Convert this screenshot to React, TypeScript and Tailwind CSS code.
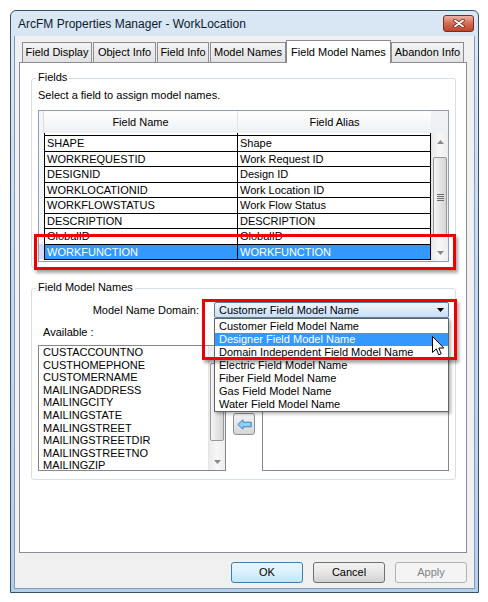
import React from "react";

// ArcFM Properties Manager dialog (Win7 look), "Field Model Names" tab open,
// with the model-name domain combo dropped down.

const ROWS: [string, string][] = [
  ["SHAPE", "Shape"],
  ["WORKREQUESTID", "Work Request ID"],
  ["DESIGNID", "Design ID"],
  ["WORKLOCATIONID", "Work Location ID"],
  ["WORKFLOWSTATUS", "Work Flow Status"],
  ["DESCRIPTION", "DESCRIPTION"],
  ["GlobalID", "GlobalID"],
  ["WORKFUNCTION", "WORKFUNCTION"],
];

const AVAILABLE = [
  "CUSTACCOUNTNO",
  "CUSTHOMEPHONE",
  "CUSTOMERNAME",
  "MAILINGADDRESS",
  "MAILINGCITY",
  "MAILINGSTATE",
  "MAILINGSTREET",
  "MAILINGSTREETDIR",
  "MAILINGSTREETNO",
  "MAILINGZIP",
];

const DOMAINS = [
  "Customer Field Model Name",
  "Designer Field Model Name",
  "Domain Independent Field Model Name",
  "Electric Field Model Name",
  "Fiber Field Model Name",
  "Gas Field Model Name",
  "Water Field Model Name",
];

const TABS = [
  { label: "Field Display", cls: "w-[70px]" },
  { label: "Object Info", cls: "ml-[1px] w-[63px]" },
  { label: "Field Info", cls: "ml-[1px] w-[52px]" },
  { label: "Model Names", cls: "ml-[1px] w-[76px]" },
  { label: "Field Model Names", cls: "w-[105px]", active: true },
  { label: "Abandon Info", cls: "w-[73px]" },
];

function Arrow({ dir }: { dir: "up" | "down" }) {
  return (
    <svg width="7" height="4" viewBox="0 0 7 4">
      <path d={dir === "up" ? "M0 4 L3.5 0 L7 4 Z" : "M0 0 L7 0 L3.5 4 Z"} fill="#8a8a8a" />
    </svg>
  );
}

function VScroll({ thumb }: { thumb: string }) {
  return (
    <div className="flex h-full w-[17px] flex-col border-l border-[#e4e4e4] bg-gradient-to-r from-[#ebebeb] via-[#f7f7f7] to-[#ededed]">
      <div className="flex h-[17px] items-center justify-center">
        <Arrow dir="up" />
      </div>
      <div className="flex-1">
        <div
          className={`mx-[1px] flex flex-col items-center justify-center gap-[1px] rounded-[2px] border border-[#979797] bg-gradient-to-r from-[#f5f5f5] to-[#d5d5d5] ${thumb}`}
        >
          <div className="h-[1px] w-[7px] bg-[#6e6e6e]" />
          <div className="h-[1px] w-[7px] bg-[#6e6e6e]" />
          <div className="h-[1px] w-[7px] bg-[#6e6e6e]" />
          <div className="h-[1px] w-[7px] bg-[#6e6e6e]" />
        </div>
      </div>
      <div className="flex h-[17px] items-center justify-center">
        <Arrow dir="down" />
      </div>
    </div>
  );
}

function GroupBox({ label, className, children }: { label: string; className: string; children: React.ReactNode }) {
  return (
    <div className={`relative ml-[11px] w-[425px] rounded-[3px] border border-[#d5dfe5] ${className}`}>
      <div className="absolute -top-[8px] left-[4px] bg-white px-[2px] leading-[13px]">{label}</div>
      {children}
    </div>
  );
}

function FieldsGrid() {
  return (
    <div className="ml-[6px] mt-[8px] h-[152px] w-[411px] border border-[#8e9fb5] bg-white">
      <div className="flex h-[22px] bg-gradient-to-b from-white to-[#eef0f3]">
        <div className="w-[5px] border-r border-[#d8dde4] bg-[#f3f5f8]" />
        <div className="flex w-[193px] items-center justify-center">Field Name</div>
        <div className="flex w-[194px] items-center justify-center border-l border-[#e2e4e8]">Field Alias</div>
        <div className="w-[17px] bg-[#eef0f3]" />
      </div>
      <div className="flex h-[128px]">
        <div className="flex w-[392px] flex-col">
          <div className="flex h-[2px]">
            <div className="w-[5px] bg-[#f5f7fa]" />
            <div className="w-[193px] border-l border-black" />
            <div className="w-[194px] border-x border-black" />
          </div>
          {ROWS.map(([name, alias], i) => {
            const sel = i === ROWS.length - 1;
            return (
              <div key={name} className="flex h-[15.5px]">
                <div className={`w-[5px] ${sel ? "bg-[#cfe0f4]" : "bg-[#f5f7fa]"}`} />
                <div
                  className={`flex flex-1 border-t border-black leading-[14px] ${
                    sel ? "bg-[#3399ff] text-white" : ""
                  }`}
                >
                  <div className="w-[193px] overflow-hidden whitespace-nowrap border-l border-black pl-[2px]">{name}</div>
                  <div className="w-[194px] overflow-hidden whitespace-nowrap border-x border-black pl-[2px]">{alias}</div>
                </div>
              </div>
            );
          })}
          <div className="flex h-[1px]">
            <div className="w-[5px] bg-[#f5f7fa]" />
            <div className="flex-1 bg-black" />
          </div>
        </div>
        <VScroll thumb="mt-[7px] h-[80px]" />
      </div>
    </div>
  );
}

function Button({ label, kind }: { label: string; kind: "default" | "normal" | "disabled" }) {
  const look =
    kind === "default"
      ? "border-[#3c7fb1] bg-gradient-to-b from-[#eaf6fd] via-[#d9f0fc] to-[#bee6fd] text-black"
      : kind === "normal"
        ? "border-[#707070] bg-gradient-to-b from-[#f2f2f2] via-[#e6e6e6] to-[#d2d2d2] text-black"
        : "border-[#adb2b5] bg-[#f4f4f4] text-[#838383]";
  return (
    <div className={`flex h-[21px] w-[72px] items-center justify-center rounded-[3px] border ${look}`}>{label}</div>
  );
}

export default function App() {
  return (
    <div className="relative h-[602px] w-[488px] overflow-hidden bg-white pl-[10px] pt-[10px] font-['Liberation_Sans',Arial,sans-serif] text-[11px] text-black">
      {/* window frame */}
      <div className="flex h-[583px] w-[469px] flex-col rounded-t-[6px] border border-[#34506f] bg-gradient-to-b from-[#dae7f5] via-[#c3d8ee] to-[#b6cfe9]">
        <div className="flex h-[25px] shrink-0 items-center justify-between pl-[7px] pr-[4px]">
          <span className="text-[12px] text-[#0b1a2c]">ArcFM Properties Manager - WorkLocation</span>
          <div className="flex h-[17px] w-[31px] items-center justify-center rounded-[3px] border border-[#7a2d1d] bg-gradient-to-b from-[#eab3a5] via-[#d46a52] to-[#c2432a]">
            <svg width="12" height="9" viewBox="0 0 12 9">
              <path d="M2 1.5 L10 7.5 M10 1.5 L2 7.5" stroke="#5a2418" strokeWidth="3.4" strokeLinecap="round" />
              <path d="M2 1.5 L10 7.5 M10 1.5 L2 7.5" stroke="#ffffff" strokeWidth="1.9" strokeLinecap="round" />
            </svg>
          </div>
        </div>

        {/* client area */}
        <div className="mx-[3px] mb-[3px] flex-1 border-x border-b border-[#7f9cbf] bg-[#f0f0f0]">
          <div className="ml-[4px] mr-[7px]">
            <div className="mt-[4px] flex h-[22px] items-end pl-[3px]">
              {TABS.map((t) =>
                t.active ? (
                  <div
                    key={t.label}
                    className={`relative z-10 -mb-[1px] flex h-[23px] items-start justify-center border-x border-t border-[#898c95] bg-white pt-[3px] ${t.cls}`}
                  >
                    {t.label}
                  </div>
                ) : (
                  <div
                    key={t.label}
                    className={`flex h-[20px] items-center justify-center border-x border-t border-[#898c95] bg-gradient-to-b from-[#f3f3f3] to-[#e2e2e2] ${t.cls}`}
                  >
                    {t.label}
                  </div>
                ),
              )}
            </div>

            {/* tab page */}
            <div className="h-[491px] border border-[#898c95] bg-white">
              <GroupBox label="Fields" className="mt-[15px] h-[190px]">
                <div className="ml-[6px] mt-[10px] h-[13px] leading-[13px]">Select a field to assign model names.</div>
                <FieldsGrid />
              </GroupBox>

              <GroupBox label="Field Model Names" className="mt-[20px] h-[192px]">
                <div className="mt-[13px] flex h-[16px] items-center">
                  <div className="w-[167px] text-right">Model Name Domain:</div>
                  <div className="relative ml-[15px] h-[16px] w-[235px]">
                    <div className="flex h-full items-center justify-between rounded-[2px] border border-[#5b7fa6] bg-gradient-to-b from-[#eef5fc] to-[#c9def3] pl-[4px] pr-[4px]">
                      <span>Customer Field Model Name</span>
                      <svg width="7" height="4" viewBox="0 0 7 4">
                        <path d="M0 0 L7 0 L3.5 4 Z" fill="#000" />
                      </svg>
                    </div>
                    {/* dropped-down list */}
                    <div className="absolute left-0 top-[16px] z-20 h-[94px] w-[235px] border border-[#646464] bg-white pt-[1px] shadow-[2px_2px_3px_rgba(0,0,0,0.3)]">
                      {DOMAINS.map((d, i) => (
                        <div
                          key={d}
                          className={`h-[13px] whitespace-nowrap pl-[4px] leading-[13px] ${
                            i === 1 ? "bg-[#3399ff] text-white" : ""
                          }`}
                        >
                          {d}
                        </div>
                      ))}
                    </div>
                  </div>
                </div>

                <div className="ml-[6px] mt-[8px] flex items-start">
                  <div className="w-[188px]">
                    <div className="h-[13px] pl-[5px] leading-[13px]">Available :</div>
                    <div className="mt-[6px] flex h-[126px] border border-[#828790] bg-white">
                      <div className="flex-1 overflow-hidden pl-[4px]">
                        {AVAILABLE.map((a) => (
                          <div key={a} className="h-[12.6px] whitespace-nowrap leading-[12.6px]">
                            {a}
                          </div>
                        ))}
                      </div>
                      <VScroll thumb="h-[78px]" />
                    </div>
                  </div>
                  <div className="ml-[7px] mt-[87px] flex h-[22px] w-[22px] items-center justify-center rounded-[3px] border border-[#8e8f8f] bg-gradient-to-b from-[#f4f4f4] to-[#d6d6d6]">
                    <svg width="15" height="11" viewBox="0 0 15 11">
                      <path
                        d="M0.8 5.5 L6 0.8 L6 3.2 L14.2 3.2 L14.2 7.8 L6 7.8 L6 10.2 Z"
                        fill="#8fd0fb"
                        stroke="#3d7fc4"
                        strokeWidth="1"
                        strokeLinejoin="round"
                      />
                    </svg>
                  </div>
                  <div className="ml-[7px] mt-[19px] h-[126px] w-[187px] border border-[#828790] bg-white" />
                </div>
              </GroupBox>
            </div>

            <div className="mt-[9px] flex justify-end gap-[10px]">
              <Button label="OK" kind="default" />
              <Button label="Cancel" kind="normal" />
              <Button label="Apply" kind="disabled" />
            </div>
          </div>
        </div>
      </div>

      {/* red annotation boxes */}
      <div className="absolute left-[34px] top-[234px] z-30 h-[36px] w-[422px] border-[3px] border-[#ee0000] shadow-[2px_3px_3px_rgba(0,0,0,0.35)]" />
      <div className="absolute left-[202px] top-[299px] z-30 h-[61px] w-[255px] border-[3px] border-[#ee0000] shadow-[2px_3px_3px_rgba(0,0,0,0.35)]" />

      {/* mouse pointer */}
      <svg className="absolute left-[432px] top-[336px] z-40" width="13" height="21" viewBox="0 0 13 21">
        <path
          d="M0.5 0.5 L0.5 16.5 L4.3 12.9 L6.8 18.8 L9.2 17.8 L6.8 12 L11.8 12 Z"
          fill="#ffffff"
          stroke="#000000"
          strokeWidth="1"
          strokeLinejoin="miter"
        />
      </svg>
    </div>
  );
}
